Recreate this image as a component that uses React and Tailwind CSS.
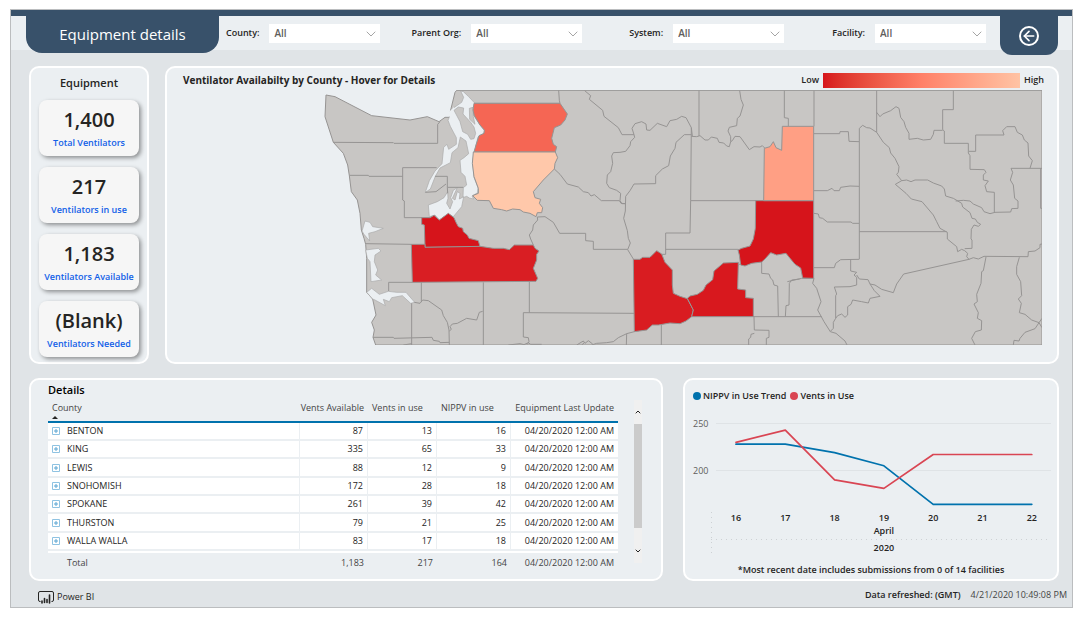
import { ArrowLeft, ChevronDown, ChevronUp } from 'lucide-react';

const FILTERS = [
  { id: 'county', label: 'County:', grow: 'flex-[4]' },
  { id: 'parent-org', label: 'Parent Org:', grow: 'flex-[5]' },
  { id: 'system', label: 'System:', grow: 'flex-[5]' },
  { id: 'facility', label: 'Facility:', grow: 'flex-[5]' },
];

const STATS = [
  { value: '1,400', label: 'Total Ventilators' },
  { value: '217', label: 'Ventilators in use' },
  { value: '1,183', label: 'Ventilators Available' },
  { value: '(Blank)', label: 'Ventilators Needed' },
];

const ROWS = [
  { county: 'BENTON', available: 87, inUse: 13, nippv: 16 },
  { county: 'KING', available: 335, inUse: 65, nippv: 33 },
  { county: 'LEWIS', available: 88, inUse: 12, nippv: 9 },
  { county: 'SNOHOMISH', available: 172, inUse: 28, nippv: 18 },
  { county: 'SPOKANE', available: 261, inUse: 39, nippv: 42 },
  { county: 'THURSTON', available: 79, inUse: 21, nippv: 25 },
  { county: 'WALLA WALLA', available: 83, inUse: 17, nippv: 18 },
];
const UPDATED = '04/20/2020 12:00 AM';

const DAYS = [16, 17, 18, 19, 20, 21, 22];
const NIPPV = [228, 228, 219, 205, 164, 164, 164];
const VENTS = [230, 243, 190, 181, 217, 217, 217];

// ── Map geometry ──
const LAND =
  'M18,30 45,35 155,92 270,105 322,95 357,110 375,97 388,97 392,75 405,22 410,16 2166,16 2166,780 167,780 159,757 163,735 155,712 168,690 158,642 140,622 140,520 137,478 132,460 124,435 120,385 112,345 94,320 88,272 83,240 70,205 40,172 15,95Z';

const WATER = [
  // Puget Sound and Hood Canal
  'M422,18 430,20 445,34 464,54 460,90 480,120 494,137 490,147 474,156 467,185 458,228 462,277 474,308 473,323 456,333 461,342 448,339 440,334 429,338 430,308 440,300 435,274 423,262 420,226 432,218 446,206 438,168 421,156 414,188 396,203 391,233 360,249 346,274 331,312 322,318 316,322 318,316 328,287 345,258 366,236 371,187 381,178 386,193 409,178 409,158 391,124 384,106 389,94 396,72 425,52 431,37Z',
  // South Sound
  'M383,320 372,338 352,350 325,360 328,395 345,390 358,405 385,387 400,395 425,365 431,335 418,342 420,325 412,320 405,345 397,340 412,308 400,316 392,338 398,350 390,372 380,355 384,340Z',
  // Grays Harbor
  'M126,438 135,408 150,412 158,425 190,430 165,440 146,445 149,468 132,448Z',
  // Willapa Bay
  'M137,495 175,490 183,498 165,510 163,530 173,555 167,570 185,585 153,590 150,530 142,520Z',
  // Columbia mouth
  'M140,622 155,610 178,628 205,619 230,622 258,622 284,652 272,655 247,632 215,638 208,650 190,643 196,662 165,645 158,642Z',
];

const ISLANDS = [
  'M402,76 415,66 431,69 429,87 452,112 462,126 467,145 462,161 452,163 443,148 428,140 420,110Z',
  'M448,70 459,67 460,95 465,118 449,103Z',
];

const SHADED = [
  { name: 'Snohomish', color: '#f56654', d: 'M462,55 720,55 742,87 735,105 722,120 703,128 695,160 700,178 710,185 706,201 462,201 468,180 477,152 492,145 493,135 480,120 463,92 459,75Z' },
  { name: 'King', color: '#ffc8aa', d: 'M460,201 706,201 713,218 705,235 703,252 670,285 640,320 645,338 662,343 658,355 668,368 665,383 652,383 648,395 630,385 610,381 600,374 578,372 560,378 545,374 520,370 508,347 472,346 458,332 475,325 475,310 462,275 457,235Z' },
  { name: 'Thurston', color: '#d6141b', d: 'M305,398 330,398 342,391 358,405 385,385 402,398 408,412 415,425 428,430 430,440 442,450 447,460 475,467 480,485 315,487 313,420 305,418Z' },
  { name: 'Lewis', color: '#d91e23', d: 'M274,478 315,478 315,487 480,484 520,490 550,490 568,494 583,480 640,480 645,490 657,498 650,508 650,525 640,550 653,580 648,589 277,592Z' },
  { name: 'Benton', color: '#d91c21', d: 'M940,523 960,523 968,517 990,517 1010,497 1025,507 1035,532 1057,555 1057,600 1060,625 1080,634 1102,641 1120,675 1115,695 1098,708 1080,716 1050,714 1015,720 997,720 980,735 943,740Z' },
  { name: 'Walla Walla', color: '#d8181e', d: 'M1102,640 1110,633 1132,628 1150,616 1158,600 1178,584 1182,558 1210,534 1255,532 1253,612 1277,615 1277,638 1300,640 1300,695 1115,695 1120,675Z' },
  { name: 'Spokane', color: '#d6141b', d: 'M1307,347 1481,347 1481,580 1448,579 1442,549 1425,538 1410,520 1398,505 1370,510 1352,503 1335,522 1325,531 1295,535 1275,543 1262,540 1258,510 1254,495 1265,490 1290,483 1300,462 1306,430Z' },
  { name: 'Stevens', color: '#ff9f84', d: 'M1333,190 1350,185 1360,170 1368,188 1385,196 1387,124 1481,124 1481,347 1331,347Z' },
];

// County borders, grouped west to east
const BORDERS_WEST = [
  'M40,172 220,173 222,175 353,175 353,118 360,110',
  'M88,271 145,271 147,274 248,274', 'M350,248 248,248 248,345 253,348 253,398 330,398',
  'M345,274 382,274 382,307 430,307', 'M316,322 348,320 378,297', 'M382,307 383,325',
  'M462,55 720,55 718,46 716,16',
  'M137,476 274,478', 'M277,592 206,592 206,618', 'M304,592 304,650', 'M275,655 275,780',
  'M283,652 300,655 308,645 325,647 365,675 370,692 382,712 387,735 388,780',
  'M159,757 220,757 222,760 336,757 340,766 358,769 360,773 388,772', 'M250,780 275,776',
  'M490,592 490,780', 'M488,679 478,682 470,705 440,700 412,715 397,717 390,725 394,733 388,738',
  'M628,590 628,683', 'M943,685 610,683 610,756 625,758 627,770 622,778',
  'M565,780 600,776 612,779 625,773 632,778 665,778', 'M703,252 720,268 742,297 775,306 790,320 805,323 813,333 823,329 844,347 898,347 903,355 916,356',
  'M652,396 675,395 700,412 719,445 797,445 797,467 820,469 820,493 923,493',
  'M652,396 653,405 640,420 638,435 628,450 632,462 640,480',
];

const BORDERS_MID = [
  'M104,17 122,32 118,43 158,76 162,94 205,128 216,149 252,149',
  'M252,149 246,130 255,116 275,110 288,117 290,135 300,136 322,115 350,125 360,107 380,103 395,94 408,98 424,128 427,153',
  'M252,149 254,157 242,170 240,182 227,199 210,202 190,203 185,213 188,235 182,260 172,270 170,295 178,308 200,316 212,325 210,347 216,356 226,356',
  'M424,149 403,149 378,172 375,190 361,213 356,242 337,252 317,272 317,296 252,297 240,317 227,334 226,378 221,400 232,437 235,460 241,474 233,494 250,522',
  'M447,17 447,153', 'M424,128 422,347 420,444 347,444 347,508 335,508', 'M424,154 440,155 450,152 465,165 475,165 484,156 502,160 507,172 521,174 530,183 538,185 542,170 547,167 555,154 570,155 598,194 612,185 630,186 637,182 645,190',
  'M569,17 573,43 580,60 570,93 562,100 560,122 538,127 534,138 542,155 542,170',
  'M703,17 703,98 715,100 715,123', 'M422,347 641,347', 'M347,493 565,493',
  'M563,542 571,536', 'M635,531 635,565 657,567 662,580 668,585 672,600 683,603 685,695',
  'M749,582 725,585 718,595 717,660 708,662 706,695', 'M610,695 815,695',
  'M612,695 613,735 657,736 657,757 649,760 649,780', 'M613,745 603,748 602,757 596,762 596,780',
  'M253,740 230,746 205,758 190,770 170,773 140,775 125,780', 'M230,746 229,780', 'M334,718 334,780',
  'M80,780 100,768 105,775 115,767 128,777', 'M95,780 103,773',
];

const BORDERS_EAST = [
  'M72,17 72,124', 'M72,146 149,146 150,140 175,140 177,169 207,170', 'M260,17 260,142',
  'M208,522 208,130 218,121 230,128 240,129 260,142 280,172 298,188 302,204 315,220 327,245 325,262 320,268 335,287 316,298 348,325 364,342 396,350 430,390 440,410 450,430 472,442 472,462 500,485 503,500 515,493 524,497 533,505 530,515 537,523',
  'M335,287 350,285 363,290 375,285 413,285 430,294 455,303 463,312 467,333 490,340 515,355 518,366 540,383 546,400 556,402 562,412 572,418 565,424 552,420 544,433 543,462 546,465 546,490 524,491',
  'M260,82 270,95 278,87 302,77 318,65 327,70 332,97 342,110 347,127 357,145 357,163 382,160 400,165 422,163 430,148 432,136 458,136',
  'M490,17 490,74 458,74 458,134 463,138 463,175 535,175 535,204 540,212 540,253 583,254 588,262 580,270 580,285 595,288 585,302 590,320 613,322 613,382',
  'M537,199 557,199 557,150 642,150 638,137 650,125 675,125 682,142 697,150 703,165 714,174 716,213 727,227 720,250',
  'M756,250 663,250 668,262 661,285 670,300 674,340 684,348 684,370 665,371 662,381 615,382 600,386 582,380 575,368 550,357 540,348 520,346 497,348',
  'M752,250 752,370 756,370', 'M72,317 112,317 126,310 132,317 148,317 152,307 180,303 207,304',
  'M72,385 85,387 88,398 98,400 112,411 183,411 188,415 207,415', 'M208,440 470,440',
  'M72,548 133,548 137,535 152,524 208,523', 'M182,524 182,558 200,562 192,570 200,577 200,600 180,605 133,606 140,627 137,632 137,700',
  'M200,570 208,582 234,584 240,597 255,600 275,613 310,623 320,597 341,567 537,523 550,518 565,522 582,514 714,515 715,500 735,498 750,488 750,478 756,477',
  'M240,597 253,617 270,634 240,640 235,654 215,650 188,645 183,658 173,665 173,690 165,697 155,687 143,692 137,700 130,712 130,730 121,739',
  'M72,580 68,595 80,610 93,650 83,675 102,710 121,740 138,745 165,768 171,780',
  'M588,516 580,557 575,560 573,595 560,628 562,650 552,657 565,683 562,700 575,707 574,735 556,740 545,760 555,780',
  'M688,517 680,545 680,568 692,590 695,632 685,642 694,655 688,683 705,688 725,705 747,713 756,700',
  'M747,713 756,728', 'M747,713 735,731 705,742 690,760 687,768 672,766 670,780',
  'M-8,590 35,580 70,580',
];

function CountyMap() {
  return (
    <svg viewBox="0 15 2166 765" className="ml-auto block h-auto w-[722px] max-w-full" role="img" aria-label="Ventilator availability by county">
      <g stroke="#969493" strokeWidth="3" strokeLinejoin="round">
        <path d={LAND} fill="#c8c6c4" />
        {WATER.map((d) => <path key={d} d={d} fill="#ebeff2" stroke="#a9a9a9" strokeWidth="2" />)}
        {/* open water between the strait and the sound */}
        <path d="M380,88 402,66 402,82 394,100 386,92Z" fill="#ebeff2" stroke="none" />
        {ISLANDS.map((d) => <path key={d} d={d} fill="#c8c6c4" stroke="#a9a9a9" strokeWidth="2" />)}
        <g fill="none">
          <path d={BORDERS_WEST.join('')} />
          <path d={BORDERS_MID.join('')} transform="translate(690 0)" />
          <path d={BORDERS_EAST.join('')} transform="translate(1410 0)" />
        </g>
        {SHADED.map((c) => <path key={c.name} d={c.d} fill={c.color} />)}
      </g>
    </svg>
  );
}

function TrendChart() {
  const x = (i) => 46 + i * 49.3;
  const y = (v) => 19.5 + (250 - v) * 0.94;
  const line = (values) => values.map((v, i) => `${x(i)},${y(v)}`).join(' ');

  return (
    <svg viewBox="0 0 362 160" className="block h-auto w-full text-[9px]" role="img" aria-label="NIPPV and vents in use, April 2020">
      {[250, 200].map((v) => (
        <g key={v}>
          <line x1="26" x2="361" y1={y(v)} y2={y(v)} stroke="#dfe3e6" />
          <text x="3" y={y(v) + 3} fill="#605e5c">{v}</text>
        </g>
      ))}
      <g fill="none" strokeWidth="1.7" strokeLinejoin="round" strokeLinecap="round">
        <polyline points={line(NIPPV)} stroke="#0072ad" />
        <polyline points={line(VENTS)} stroke="#d94553" />
      </g>
      <g stroke="#cdd1d4" strokeDasharray="1 4">
        <line x1="21.5" x2="21.5" y1="108" y2="152" />
        <line x1="21" x2="358" y1="135.5" y2="135.5" />
      </g>
      <g fill="#252423" textAnchor="middle" className="font-semibold">
        {DAYS.map((d, i) => <text key={d} x={x(i)} y="117">{d}</text>)}
        <text x={x(3)} y="130">April</text>
        <text x={x(3)} y="147">2020</text>
      </g>
    </svg>
  );
}

function PowerBiIcon() {
  return (
    <svg viewBox="0 0 16 13" className="h-[13px] w-4" fill="none" stroke="#252423" aria-hidden="true">
      <path d="M2.5 10.5H2A1.5 1.5 0 0 1 .5 9V2A1.5 1.5 0 0 1 2 .5h12A1.5 1.5 0 0 1 15.5 2v7a1.5 1.5 0 0 1-1.5 1.5h-.5" />
      <path d="M4 10v2M6.5 7.5v4M9 8.5v3M11.500 4v8" strokeWidth="1.6" strokeLinecap="round" />
    </svg>
  );
}

function ExpandIcon() {
  return (
    <svg viewBox="0 0 8 8" className="h-2 w-2" fill="none" stroke="#8fc3e2" aria-hidden="true">
      <path d="M.5.5h7v7h-7z" />
      <path d="M2 4h4M4 2v4" stroke="#5aa5d2" />
    </svg>
  );
}

export default function App() {
  const panel = 'rounded-[10px] border-2 border-white bg-[#ebeff2]';
  const cell = 'border-r border-b-2 border-[#ebeff2] bg-white pr-1 text-right';

  return (
    <div className="min-h-screen bg-white pt-[9px] pr-[15px] pb-[11px] pl-2.5 font-['Open_Sans',sans-serif] text-[#252423]">
      <div className="border border-[#bbbdbf] bg-[#e0e4e7]">
        {/* Header */}
        <header className="h-10 border-t-[6px] border-[#38516a] bg-[#ebeff2]">
          <div className="flex items-start pr-3.5 pl-[15px]">
            <h1 className="flex h-[37px] w-[193px] items-center justify-center rounded-b-2xl bg-[#38516a] text-[15px] text-white">
              Equipment details
            </h1>
            {FILTERS.map((f) => (
              <div key={f.id} className={`${f.grow} mt-2 flex h-[19px] items-center justify-end gap-2.5`}>
                <label htmlFor={f.id} className="pb-0.5 text-[9px] font-semibold whitespace-nowrap">{f.label}</label>
                <div className="relative">
                  <select id={f.id} className="block h-[19px] w-[111px] appearance-none bg-white px-[5px] text-[10px] font-semibold text-[#605e5c]">
                    <option>All</option>
                  </select>
                  <ChevronDown className="pointer-events-none absolute top-0.5 right-px h-4 w-4 text-[#777]" strokeWidth={1} />
                </div>
              </div>
            ))}
            <button aria-label="Back" className="ml-3.5 flex h-[39px] w-[58px] items-center justify-center rounded-b-xl bg-[#38516a] text-white">
              <span className="flex h-5 w-5 items-center justify-center rounded-full border-2 border-white">
                <ArrowLeft className="h-4 w-4" strokeWidth={2.5} />
              </span>
            </button>
          </div>
        </header>

        <main className="flex flex-col gap-3.5 pt-4 pr-[13px] pl-[18px]">
          <div className="flex gap-4">
            {/* Equipment totals */}
            <section className={`${panel} w-[120px] px-2 pb-[5px]`}>
              <h2 className="pt-1.5 pb-2 text-center text-[11px] leading-[18px] font-semibold">Equipment</h2>
              <div className="flex flex-col gap-[11px]">
                {STATS.map((s) => (
                  <div key={s.label} className="h-14 rounded-lg bg-[#f6f6f6] pt-2 text-center shadow-[2px_2px_4px_rgba(0,0,0,0.4)]">
                    <div className="text-[20px] leading-6 font-semibold">{s.value}</div>
                    <div className="pt-[5px] text-[9px] leading-3 font-semibold whitespace-nowrap text-[#1160e8]">{s.label}</div>
                  </div>
                ))}
              </div>
            </section>

            {/* Map */}
            <section className={`${panel} min-w-0 flex-1 pr-[15px] pl-4`}>
              <div className="flex h-[22px] items-center justify-between pt-0.5">
                <h2 className="text-[10px] font-bold">Ventilator Availabilty by County - Hover for Details</h2>
                <div className="-mr-0.5 flex items-center gap-1 text-[9px] font-semibold">
                  <span>Low</span>
                  <span className="h-[15px] w-[197px] bg-linear-to-r from-[#d6141b] via-[#ff8068] to-[#ffc3a4]" />
                  <span>High</span>
                </div>
              </div>
              <CountyMap />
            </section>
          </div>

          <div className="flex gap-5">
            {/* Details table */}
            <section className={`${panel} flex h-[203px] min-w-0 flex-1 gap-4 pr-[19px] pl-[17px]`}>
              <div className="min-w-0 flex-1">
                <h2 className="pt-0.5 text-[11px] leading-4 font-semibold text-black">Details</h2>
                <table className="w-full table-fixed border-separate border-spacing-0 text-[9px] leading-4">
                  <colgroup>
                    <col />
                    <col className="w-[68px]" />
                    <col className="w-[69px]" />
                    <col className="w-[74px]" />
                    <col className="w-[107px]" />
                  </colgroup>
                  <thead>
                    <tr className="h-[25px] text-left align-top text-[#444] [&>th]:border-b-2 [&>th]:border-[#0072ad] [&>th]:pt-0.5 [&>th]:font-normal [&>th]:whitespace-nowrap">
                      <th className="pl-1" aria-sort="ascending">
                        <span className="block leading-4">County</span>
                        <span className="block h-0 w-0 border-x-[3px] border-b-[3px] border-x-transparent border-b-[#252423]" />
                      </th>
                      <th className="pr-1 text-right">Vents Available</th>
                      <th className="pl-1">Vents in use</th>
                      <th className="pl-1">NIPPV in use</th>
                      <th className="pr-1 text-right">Equipment Last Update</th>
                    </tr>
                  </thead>
                  <tbody>
                    {ROWS.map((r) => (
                      <tr key={r.county} className="h-[18px] nth-[3n]:h-[19px]">
                        <td className="border-r border-b-2 border-[#ebeff2] bg-white pl-1">
                          <button className="flex items-center gap-[7px]">
                            <ExpandIcon />
                            {r.county}
                          </button>
                        </td>
                        <td className={cell}>{r.available}</td>
                        <td className={cell}>{r.inUse}</td>
                        <td className={cell}>{r.nippv}</td>
                        <td className="border-b-2 border-[#ebeff2] bg-white pr-1 text-right">{UPDATED}</td>
                      </tr>
                    ))}
                  </tbody>
                  <tfoot>
                    <tr className="text-[#444] [&>td]:border-t-2 [&>td]:border-white [&>td]:pt-0.5 [&>td]:pr-1 [&>td]:text-right">
                      <th className="border-t-2 border-white pt-0.5 pl-[19px] text-left font-normal">Total</th>
                      <td>1,183</td>
                      <td>217</td>
                      <td>164</td>
                      <td>{UPDATED}</td>
                    </tr>
                  </tfoot>
                </table>
              </div>
              <div className="mt-5 flex h-[163px] w-2 flex-col items-center bg-[#f0f0f0] pt-2">
                <ChevronUp className="h-2 w-2" strokeWidth={3} />
                <span className="mt-2 h-[104px] w-full bg-[#cbcbcb]" />
                <ChevronDown className="mt-auto mb-2 h-2 w-2" strokeWidth={3} />
              </div>
            </section>

            {/* Usage trend */}
            <section className={`${panel} w-[376px] px-[5px] pt-2 text-[9px] font-semibold`}>
              <div className="flex gap-1 pl-[3px] leading-4">
                <span className="flex items-center gap-0.5">
                  <i className="h-2 w-2 rounded-full bg-[#0072ad]" />
                  NIPPV in Use Trend
                </span>
                <span className="flex items-center gap-0.5">
                  <i className="h-2 w-2 rounded-full bg-[#d94553]" />
                  Vents in Use
                </span>
              </div>
              <div className="font-normal">
                <TrendChart />
              </div>
              <p className="text-center leading-3">*Most recent date includes submissions from 0 of 14 facilities</p>
            </section>
          </div>
        </main>

        {/* Footer */}
        <footer className="flex h-[26px] items-center justify-between pt-1.5 pr-[5px] pl-[27px] text-[9px]">
          <div className="flex items-center gap-[3px]">
            <PowerBiIcon />
            <span>Power BI</span>
          </div>
          <div className="flex gap-2.5 pb-1">
            <span className="font-semibold">Data refreshed: (GMT)</span>
            <span className="text-[#444]">4/21/2020 10:49:08 PM</span>
          </div>
        </footer>
      </div>
    </div>
  );
}
